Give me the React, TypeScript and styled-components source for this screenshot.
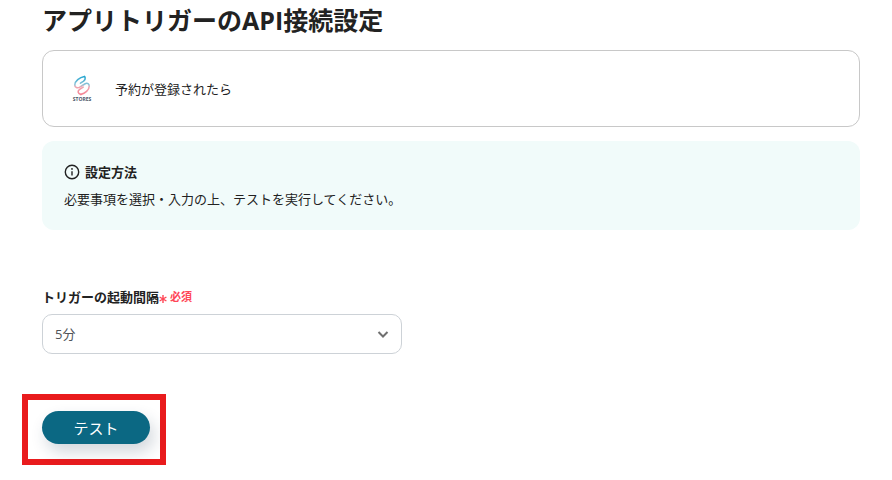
import React from "react";
import styled, { createGlobalStyle } from "styled-components";

const GlobalStyle = createGlobalStyle`
  *, *::before, *::after { box-sizing: border-box; }
  body {
    margin: 0;
    background: #fff;
    color: #222;
    font-family: "Open Sans", "Noto Sans CJK JP", sans-serif;
    font-size: 13px;
    line-height: 20px;
  }
`;

const Page = styled.main`
  padding: 2px 32px 15px 42px;
`;

const Title = styled.h1`
  margin: 0 0 12px;
  font-size: 25px;
  line-height: 36px;
  font-weight: 700;
`;

const TriggerCard = styled.section`
  display: flex;
  align-items: center;
  gap: 23px;
  min-height: 77px;
  padding: 0 29px;
  border: 1px solid #c8c8c8;
  border-radius: 12px;
`;

const Logo = styled.svg`
  flex: none;
  width: 20px;
  height: 28px;
`;

const Text = styled.p`
  margin: 0;
`;

const Notice = styled.section`
  margin-top: 14px;
  padding: 21px 22px;
  border-radius: 12px;
  background: #f1fbfa;
`;

const NoticeTitle = styled.h2`
  display: flex;
  align-items: center;
  gap: 5px;
  margin: 0 0 7px;
  font-size: 13px;
  line-height: 20px;
`;

const InfoIcon = styled.svg`
  width: 16px;
  height: 16px;
`;

const Field = styled.div`
  max-width: 360px;
  margin-top: 57px;
`;

const Label = styled.label`
  display: flex;
  align-items: center;
  margin-bottom: 7px;
  font-weight: 700;
`;

const Required = styled.span`
  display: flex;
  align-items: center;
  gap: 3px;
  color: #ff4757;
  font-size: 11px;
  font-weight: 700;
`;

const Asterisk = styled.svg`
  width: 8px;
  height: 12px;
`;

const SelectBox = styled.div`
  display: grid;
  align-items: center;

  > * { grid-area: 1 / 1; }
`;

const Select = styled.select`
  width: 100%;
  height: 40px;
  padding: 0 40px 0 12px;
  appearance: none;
  border: 1px solid #cdd2d7;
  border-radius: 10px;
  background: #fff;
  color: #505459;
  font: inherit;
`;

const Chevron = styled.svg`
  justify-self: end;
  width: 12px;
  height: 8px;
  margin-right: 13px;
  pointer-events: none;
`;

const Highlight = styled.div`
  width: fit-content;
  margin: 40px 0 0 -20px;
  padding: 11px 10px 15px 14px;
  border: 6px solid #e91b1d;
`;

const TestButton = styled.button`
  display: block;
  height: 33px;
  min-width: 108px;
  padding: 0 31px;
  border: 0;
  border-radius: 17px;
  background: #0b6883;
  box-shadow: 4px 8px 16px rgba(30, 55, 80, 0.2);
  color: #fff;
  font: inherit;
  font-size: 15px;
  cursor: pointer;
`;

function StoresLogo() {
  return (
    <Logo viewBox="0 0 20 28" role="img" aria-label="STORES">
      <defs>
        <linearGradient id="stores-ribbon" gradientUnits="userSpaceOnUse" x1="0" y1="1" x2="0" y2="20">
          <stop offset="0" stopColor="#1fa5d0" />
          <stop offset="0.45" stopColor="#8fc4d8" />
          <stop offset="0.58" stopColor="#f3a5b0" />
          <stop offset="1" stopColor="#f58392" />
        </linearGradient>
      </defs>
      <g
        fill="none"
        stroke="url(#stores-ribbon)"
        strokeWidth="1.6"
        strokeLinecap="round"
        strokeLinejoin="round"
      >
        <path d="M12.5 1.500C7.500 2.300 2.800 6 2.800 9.900c0 2.800 2.600 3.400 5 2.200 1.800-.9 3.400-2.400 5.400-3.400 2.200-1 4 .1 4 2.500 0 3.800-4.200 7.300-8.400 8.200" />
        <path d="M12.500 1.500c1.300 1.500.7 3.500-1.200 4.900L8.500 8.200M8.800 19.400c-3-1-3.600-3.400-1.200-5l3.600-2.300" />
      </g>
      <text
        x="10"
        y="26"
        textAnchor="middle"
        fill="#4a5568"
        fontFamily="Open Sans, sans-serif"
        fontSize="5"
        fontWeight="700"
      >
        STORES
      </text>
    </Logo>
  );
}

export default function App() {
  return (
    <>
      <GlobalStyle />
      <Page lang="ja">
        <Title>アプリトリガーのAPI接続設定</Title>
        <TriggerCard>
          <StoresLogo />
          <Text>予約が登録されたら</Text>
        </TriggerCard>
        <Notice>
          <NoticeTitle>
            <InfoIcon viewBox="0 0 16 16" aria-hidden="true">
              <circle cx="8" cy="8" r="6.7" fill="none" stroke="#222" strokeWidth="1.4" />
              <path d="M8 7.2v4.300" stroke="#222" strokeWidth="1.4" />
              <circle cx="8" cy="4.9" r="0.9" fill="#222" />
            </InfoIcon>
            設定方法
          </NoticeTitle>
          <Text>必要事項を選択・入力の上、テストを実行してください。</Text>
        </Notice>
        <Field>
          <Label htmlFor="interval">
            トリガーの起動間隔
            <Required>
              <Asterisk viewBox="0 0 8 12" aria-hidden="true">
                <path
                  d="M4 4v8M.6 6l6.800 4M.6 10l6.800-4"
                  fill="none"
                  stroke="currentColor"
                  strokeWidth="1.4"
                />
              </Asterisk>
              必須
            </Required>
          </Label>
          <SelectBox>
            <Select id="interval" defaultValue="5">
              <option value="5">5分</option>
            </Select>
            <Chevron viewBox="0 0 12 8" aria-hidden="true">
              <path d="M1.5 2 6 6.500l4.500-4.500" fill="none" stroke="#707070" strokeWidth="2" />
            </Chevron>
          </SelectBox>
        </Field>
        <Highlight>
          <TestButton type="button">テスト</TestButton>
        </Highlight>
      </Page>
    </>
  );
}
